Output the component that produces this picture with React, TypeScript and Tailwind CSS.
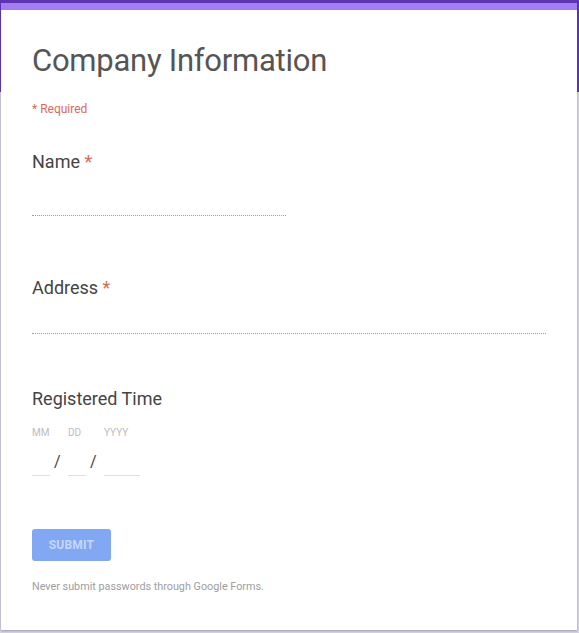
import React from "react";

export default function App() {
  return (
    <div
      className="min-h-[633px] w-full pt-[3px] pl-[1px] pr-[2px] pb-[3px] bg-[linear-gradient(to_bottom,#5e35b1_0px,#5e35b1_92px,#d6d3e0_92px,#d6d3e0_100%)]"
      style={{ fontFamily: "Roboto, 'Noto Sans', Arial, sans-serif" }}
    >
      <div className="bg-white border-t-[7px] border-[#a47cf3] shadow-[0_1px_2px_rgba(60,40,110,0.35)] px-[31px] pt-[31px] pb-[35px]">
        <h1 className="text-[31px] leading-[40px] tracking-[-0.25px] text-[#555555] font-normal">
          Company Information
        </h1>
        <div className="mt-[20px] text-[12px] leading-[16px] text-[#d9695f]">
          * Required
        </div>

        <div className="mt-[33px] text-[18px] leading-[24px] text-[#444444]">
          Name <span className="text-[#d9695f]">*</span>
        </div>
        <div className="mt-[10px] h-[32px] w-[254px] border-b border-dotted border-[#9e9e9e]" />

        <div className="mt-[60px] text-[18px] leading-[24px] text-[#444444]">
          Address <span className="text-[#d9695f]">*</span>
        </div>
        <div className="mt-[2px] h-[32px] w-full border-b border-dotted border-[#9e9e9e]" />

        <div className="mt-[53px] text-[18px] leading-[24px] text-[#444444]">
          Registered Time
        </div>
        <div className="mt-[15px] flex text-[10px] leading-[14px] text-[#bdbdbd]">
          <span className="w-[36px]">MM</span>
          <span className="w-[36px]">DD</span>
          <span>YYYY</span>
        </div>
        <div className="mt-[6px] flex items-start h-[30px]">
          <div className="w-[18px] h-[30px] border-b border-[#e0e0e0]" />
          <div className="w-[18px] pl-[4px] pt-[4px] text-[16px] leading-[24px] text-[#444444]">/</div>
          <div className="w-[18px] h-[30px] border-b border-[#e0e0e0]" />
          <div className="w-[18px] pl-[4px] pt-[4px] text-[16px] leading-[24px] text-[#444444]">/</div>
          <div className="w-[36px] h-[30px] border-b border-[#e0e0e0]" />
        </div>

        <button
          type="button"
          className="mt-[53px] block h-[32px] w-[79px] rounded-[3px] bg-[#82a8f3] text-[12px] font-bold tracking-[0.2px] text-[#c6d7fb]"
        >
          SUBMIT
        </button>

        <p className="mt-[18px] text-[10.8px] leading-[16px] text-[#9e9e9e]">
          Never submit passwords through Google Forms.
        </p>
      </div>
    </div>
  );
}
